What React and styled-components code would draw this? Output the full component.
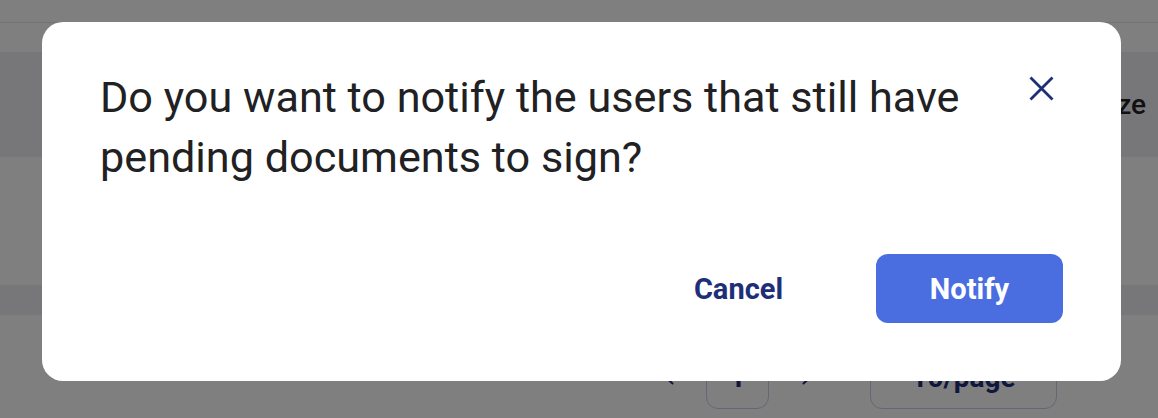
import React from "react";
import styled, { createGlobalStyle } from "styled-components";

const GlobalStyle = createGlobalStyle`
  html, body {
    margin: 0;
    padding: 0;
    background: #ffffff;
    font-family: Roboto, "Liberation Sans", Arial, sans-serif;
  }
`;

const Page = styled.div`
  position: relative;
  width: 1158px;
  height: 418px;
  overflow: hidden;
  background: #ffffff;
`;

const TopBar = styled.div`
  height: 22px;
  border-bottom: 1px solid #e4e4ee;
`;

const Gap = styled.div`
  height: ${(p) => p.h}px;
  background: ${(p) => p.bg || "#ffffff"};
`;

const TableHead = styled.div`
  height: 105px;
  background: #eeeef5;
  display: flex;
  align-items: center;
  justify-content: flex-end;
  padding-right: 12px;
`;

const HeadCell = styled.span`
  font-size: 28px;
  font-weight: 500;
  color: #222;
`;

const Footer = styled.div`
  display: flex;
  align-items: center;
  justify-content: flex-end;
  gap: 25px;
  padding: 31px 101px 0 0;
`;

const Chevron = styled.span`
  display: flex;
  width: 24px;
  justify-content: center;
  color: #1e2f78;
`;

const PageBox = styled.div`
  box-sizing: border-box;
  width: ${(p) => p.w}px;
  height: 63px;
  margin-left: ${(p) => p.ml || 0}px;
  border: 1px solid #c9cde6;
  border-radius: 12px;
  display: flex;
  align-items: center;
  justify-content: center;
  font-size: 28px;
  font-weight: 700;
  color: #1e2f78;
`;

const Overlay = styled.div`
  position: absolute;
  inset: 0;
  background: rgba(0, 0, 0, 0.5);
  padding: 22px 0 0 42px;
`;

const Modal = styled.div`
  box-sizing: border-box;
  width: 1079px;
  height: 359px;
  background: #ffffff;
  border-radius: 21px;
  padding: 46px 58px 58px 58px;
  display: flex;
  flex-direction: column;
`;

const Header = styled.div`
  display: flex;
  align-items: flex-start;
  gap: 24px;
`;

const Title = styled.h2`
  flex: 1;
  margin: 0;
  font-size: 43.2px;
  line-height: 60px;
  font-weight: 400;
  color: #212124;
`;

const CloseButton = styled.button`
  border: 0;
  background: none;
  padding: 0;
  margin: 8px 9px 0 0;
  width: 25px;
  height: 25px;
  color: #1e2f78;
  cursor: pointer;
  display: flex;
`;

const Actions = styled.div`
  margin-top: auto;
  display: flex;
  justify-content: flex-end;
  gap: 44px;
`;

const Button = styled.button`
  width: 187px;
  height: 69px;
  border: 0;
  border-radius: 12px;
  font-family: inherit;
  font-size: 29px;
  font-weight: 700;
  cursor: pointer;
  background: ${(p) => (p.primary ? "#4a6ee0" : "transparent")};
  color: ${(p) => (p.primary ? "#ffffff" : "#1e2f78")};
`;

const ChevronIcon = ({ dir }) => (
  <svg width="9" height="14" viewBox="0 0 9 14" fill="none">
    <path
      d={dir === "left" ? "M7.5 1.5 L1.5 7 L7.5 12.5" : "M1.5 1.5 L7.5 7 L1.5 12.5"}
      stroke="currentColor"
      strokeWidth="2"
      strokeLinecap="round"
      strokeLinejoin="round"
    />
  </svg>
);

export default function App() {
  return (
    <Page>
      <GlobalStyle />
      <TopBar />
      <Gap h={29} />
      <TableHead>
        <HeadCell>Size</HeadCell>
      </TableHead>
      <Gap h={128} />
      <Gap h={30} bg="#eeeef5" />
      <Footer>
        <Chevron>
          <ChevronIcon dir="left" />
        </Chevron>
        <PageBox w={63}>1</PageBox>
        <Chevron>
          <ChevronIcon dir="right" />
        </Chevron>
        <PageBox w={187} ml={27}>
          10/page
        </PageBox>
      </Footer>

      <Overlay>
        <Modal role="dialog">
          <Header>
            <Title>
              Do you want to notify the users that still have pending documents
              to sign?
            </Title>
            <CloseButton aria-label="Close">
              <svg width="25" height="25" viewBox="0 0 25 25" fill="none">
                <path
                  d="M1.5 1.5 L23.5 23.5 M23.5 1.5 L1.5 23.5"
                  stroke="currentColor"
                  strokeWidth="2.8"
                />
              </svg>
            </CloseButton>
          </Header>
          <Actions>
            <Button>Cancel</Button>
            <Button primary>Notify</Button>
          </Actions>
        </Modal>
      </Overlay>
    </Page>
  );
}
